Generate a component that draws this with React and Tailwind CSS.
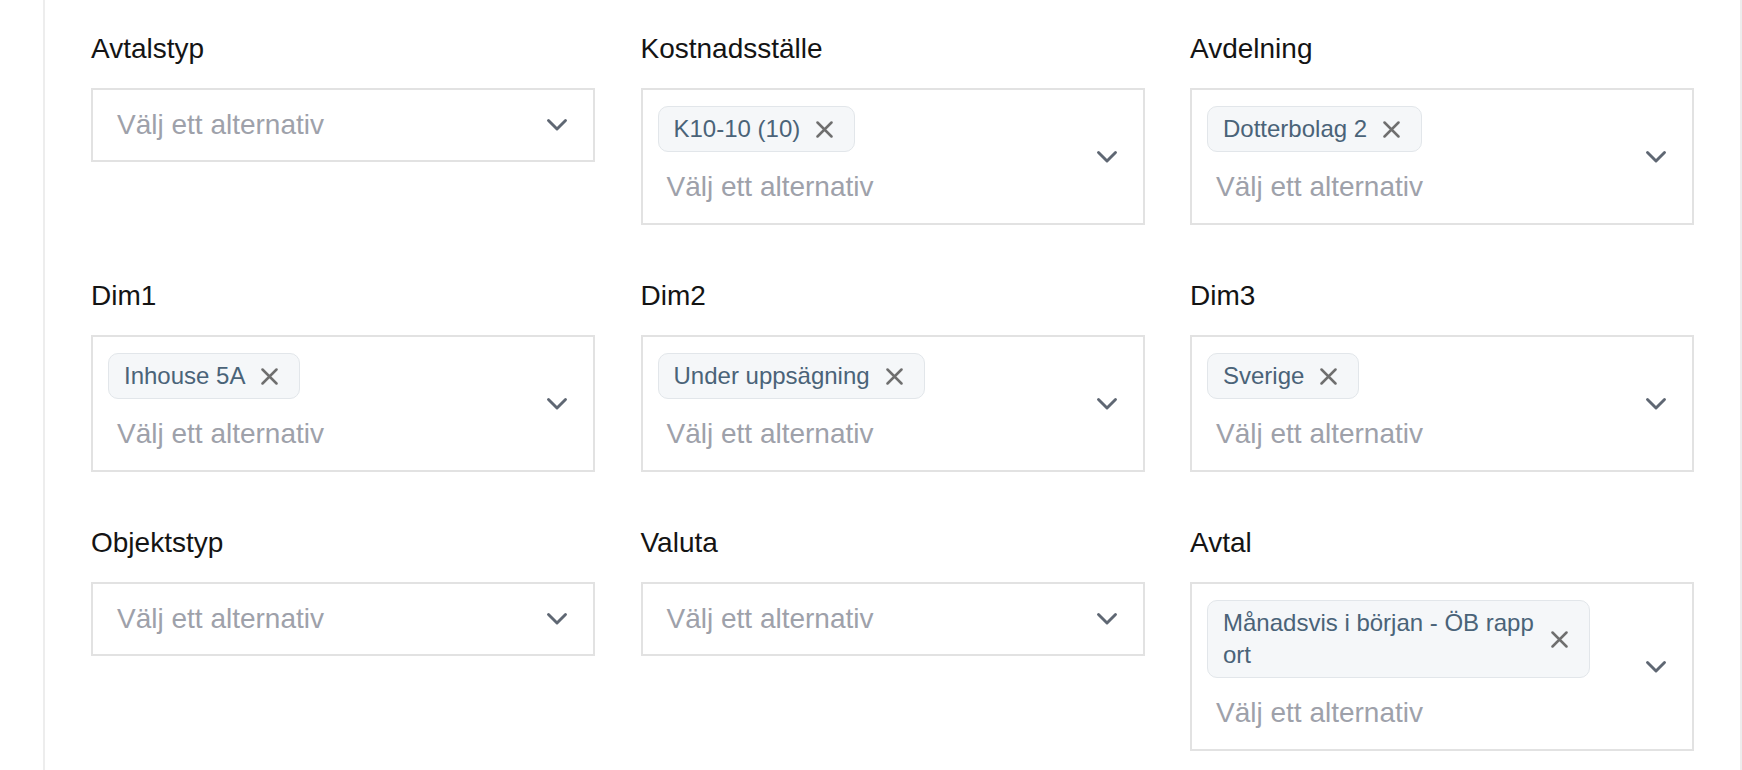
import { useState } from "react";

const fields = [
  { label: "Avtalstyp", values: [] },
  { label: "Kostnadsställe", values: ["K10-10 (10)"] },
  { label: "Avdelning", values: ["Dotterbolag 2"] },
  { label: "Dim1", values: ["Inhouse 5A"] },
  { label: "Dim2", values: ["Under uppsägning"] },
  { label: "Dim3", values: ["Sverige"] },
  { label: "Objektstyp", values: [] },
  { label: "Valuta", values: [] },
  { label: "Avtal", values: ["Månadsvis i början - ÖB rapport"] },
];

function CloseIcon() {
  return (
    <svg width="17" height="17" viewBox="0 0 17 17" className="shrink-0">
      <path d="M1.5 1.5 15.5 15.5M15.5 1.5 1.5 15.5" stroke="#6f6f6f" strokeWidth="2.5" strokeLinecap="round" />
    </svg>
  );
}

function Chevron() {
  return (
    <svg width="22" height="14" viewBox="0 0 22 14" className="shrink-0">
      <polyline
        points="2.5,2.5 11,11 19.5,2.5"
        fill="none"
        stroke="#5f6773"
        strokeWidth="2.9"
        strokeLinecap="round"
        strokeLinejoin="round"
      />
    </svg>
  );
}

function Chip({ text, onRemove }) {
  return (
    <span className="inline-flex items-center rounded-[10px] border-[1.5px] border-[#e2e6ea] bg-[#f5f7f9] py-[6px] pl-[15px] pr-[21px]">
      <span className="max-w-[312px] break-all text-[24px] leading-[32px] text-[#4a6378]">{text}</span>
      <button type="button" onClick={onRemove} className="ml-[16px] flex items-center">
        <CloseIcon />
      </button>
    </span>
  );
}

function MultiSelect({ label, initial }) {
  const [values, setValues] = useState(initial);
  const hasValues = values.length > 0;

  return (
    <div className="flex flex-col">
      <label className="mb-[18px] text-[28px] leading-[42px] text-[#141414]">{label}</label>
      <div
        className={`flex items-center border-2 border-[#e2e2e2] bg-white pl-[15px] pr-[25px] ${
          hasValues ? "pt-[16px] pb-[15px]" : "py-[14px]"
        }`}
      >
        <div className="flex min-w-0 flex-1 flex-col">
          {hasValues && (
            <div className="mb-[14px] flex flex-wrap gap-2">
              {values.map((v) => (
                <Chip key={v} text={v} onRemove={() => setValues(values.filter((x) => x !== v))} />
              ))}
            </div>
          )}
          <span className="pl-[9px] text-[28px] leading-[42px] text-[#9ea1aa]">Välj ett alternativ</span>
        </div>
        <Chevron />
      </div>
    </div>
  );
}

export default function App() {
  return (
    <div className="h-[770px] overflow-hidden bg-white pl-[43px] font-['Liberation_Sans',Arial,sans-serif]">
      <div className="h-full border-x-2 border-[#ededed] px-[46px] pt-[28px]">
        <div className="grid grid-cols-3 items-start gap-x-[45.5px] gap-y-[50px]">
          {fields.map((f) => (
            <MultiSelect key={f.label} label={f.label} initial={f.values} />
          ))}
        </div>
      </div>
    </div>
  );
}
